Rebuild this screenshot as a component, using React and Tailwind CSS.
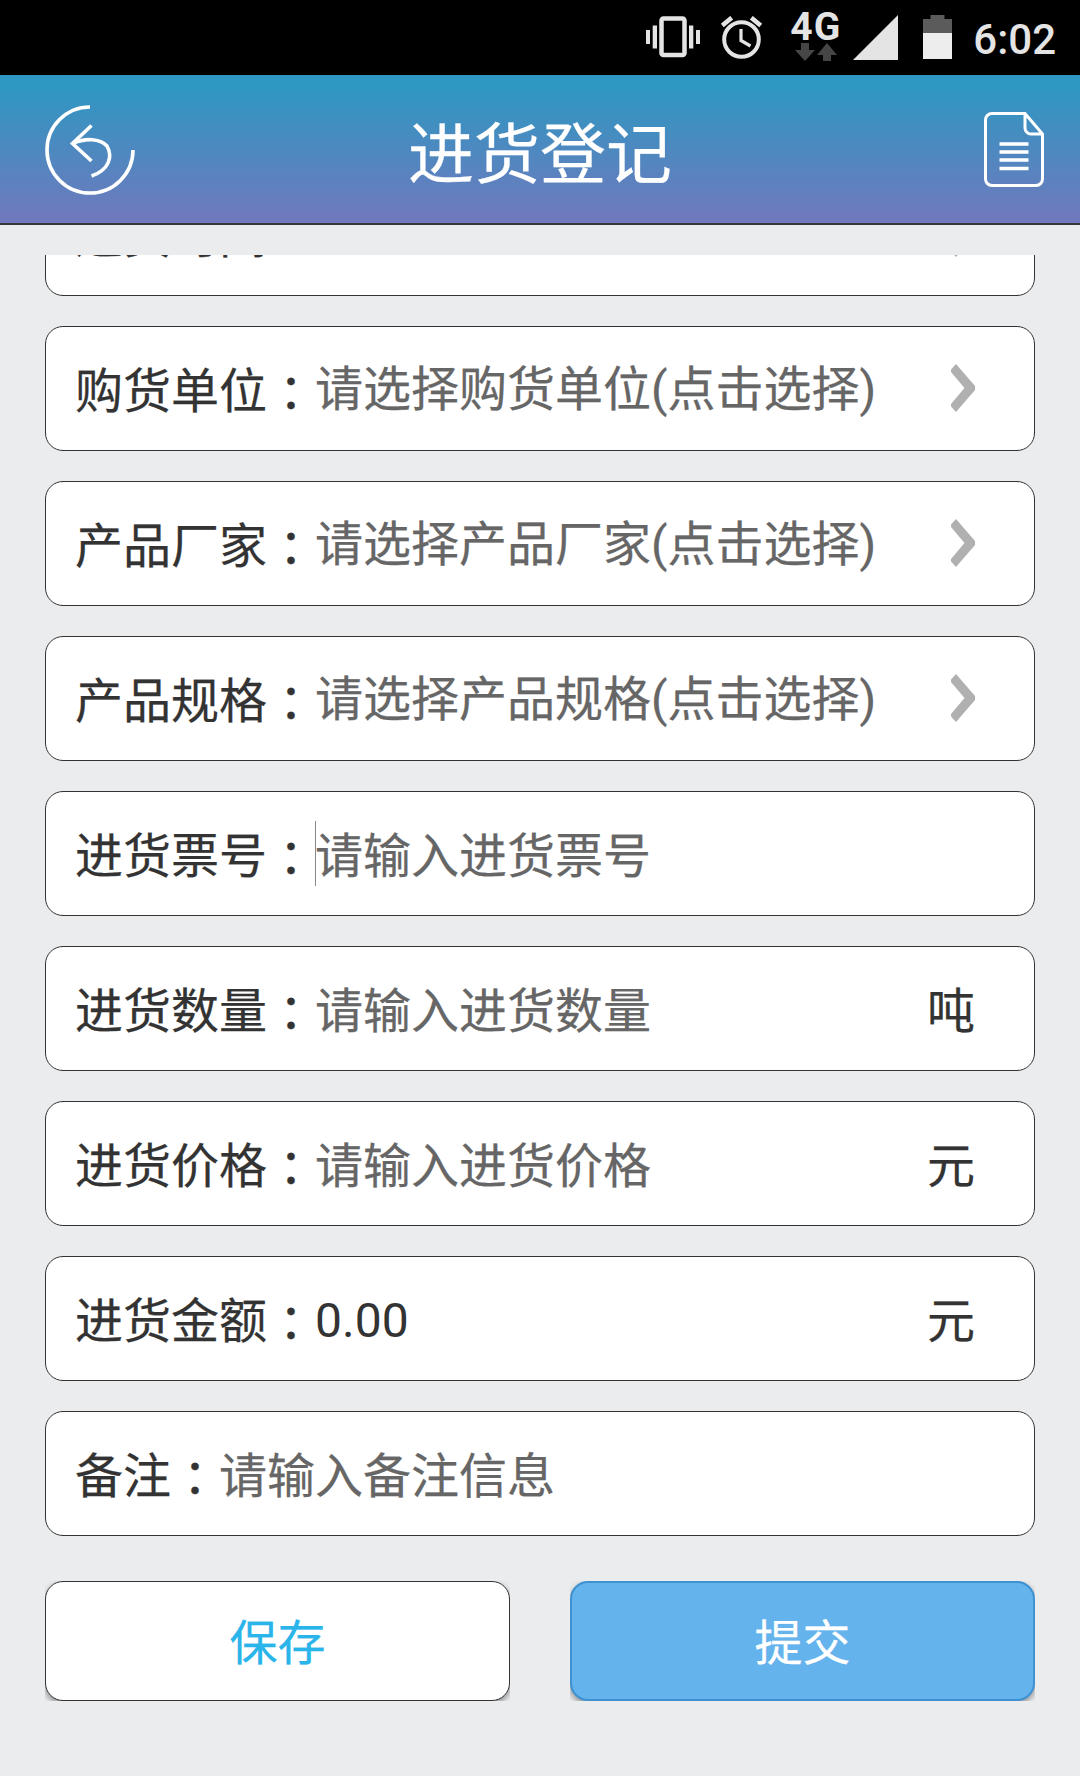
import clsx from "clsx";

const fields = [
  { label: "进货时间", type: "select", text: "" },
  { label: "购货单位", type: "select", text: "请选择购货单位(点击选择)" },
  { label: "产品厂家", type: "select", text: "请选择产品厂家(点击选择)" },
  { label: "产品规格", type: "select", text: "请选择产品规格(点击选择)" },
  { label: "进货票号", type: "input", text: "请输入进货票号", focused: true },
  { label: "进货数量", type: "input", text: "请输入进货数量", unit: "吨" },
  { label: "进货价格", type: "input", text: "请输入进货价格", unit: "元" },
  { label: "进货金额", type: "value", text: "0.00", unit: "元" },
  { label: "备注", type: "input", text: "请输入备注信息" },
];

const StatusBar = () => (
  <div className="h-[75px] shrink-0 bg-black pr-[24px] flex items-start justify-end text-[#e4e4e4]">
    {/* Vibrate */}
    <svg className="mt-4 mr-5" width="54" height="42" viewBox="0 0 54 42" fill="currentColor">
      <rect x="0" y="14" width="4" height="14" />
      <rect x="6.7" y="9.5" width="4.3" height="23" />
      <rect x="15.5" y="2.5" width="23" height="36.5" rx="2" fill="none" stroke="currentColor" strokeWidth="4.5" />
      <rect x="43" y="9.5" width="4.3" height="23" />
      <rect x="50" y="14" width="4" height="14" />
    </svg>

    {/* Alarm */}
    <svg className="mt-4 mr-[27px]" width="43" height="44" viewBox="0 0 43 44" fill="none" stroke="currentColor" strokeWidth="4">
      <circle cx="21.5" cy="23.5" r="17.3" />
      <path d="M2.3 9.5L11.7 1.7M40.7 9.5L31.3 1.7" strokeWidth="4.6" />
      <path d="M21 13V24.5L30.5 30" strokeWidth="3.2" />
    </svg>

    {/* Network */}
    <div className="w-[51px] mr-3 pt-[14px] flex flex-col items-center">
      <span className="h-[27px] leading-[27px] text-[39px] font-bold tracking-[1px] whitespace-nowrap">4G</span>
      <svg className="mt-[2px]" width="42" height="18" viewBox="0 0 42 18" fill="#464646">
        <path d="M6 0H14V7H20L10 18L0 7H6Z" />
        <path d="M28 18H36V12H42L32 0L22 12H28Z" />
      </svg>
    </div>

    {/* Signal */}
    <svg className="mt-[15px] mr-[25px]" width="45" height="45" viewBox="0 0 45 45" fill="currentColor">
      <path d="M45 0V45H0Z" />
    </svg>

    {/* Battery */}
    <svg className="mt-[15px] mr-[21px]" width="29" height="44" viewBox="0 0 29 44">
      <path d="M7.5 0H21.5V4H29V18H0V4H7.5Z" fill="#5b5b5b" />
      <rect y="18" width="29" height="26" fill="#ededed" />
    </svg>

    <span className="mt-[15px] text-[42px] leading-[50px] font-medium">6:02</span>
  </div>
);

const Header = () => (
  <header className="h-[150px] shrink-0 pl-[45px] pr-[36px] flex items-start justify-between text-white bg-linear-to-b/srgb from-[#2e97c2] from-8% to-[#7278bd] border-b-2 border-[#37363b]">
    <button className="w-[90px] mt-[30px]">
      <svg width="90" height="90" viewBox="0 0 90 90" fill="none" stroke="currentColor" strokeWidth="3.6">
        <path d="M45 2A43 43 0 1 0 88 45" />
        <path d="M46.5 20.5L27.5 38.5L46.5 56" />
        <path d="M27.5 38.5C40 33 55 33 62 41C68 52 64 65 46.5 71" />
      </svg>
    </button>
    <h1 className="pt-[33px] text-[66px] leading-[96px] [-webkit-text-stroke:0.25px]">进货登记</h1>
    <button className="w-[99px] mt-[37px] flex justify-end">
      <svg width="60" height="75" viewBox="0 0 60 75" fill="none" stroke="currentColor" strokeWidth="3">
        <path d="M41 1.5H8A6.5 6.5 0 0 0 1.5 8V67A6.5 6.5 0 0 0 8 73.5H52A6.5 6.5 0 0 0 58.5 67V22L41 1.5V16A6 6 0 0 0 47 22H58.5" />
        <path d="M15.5 32H44.5M15.5 40H44.5M15.5 48H44.5M15.5 56.5H44.5" strokeWidth="3.6" />
      </svg>
    </button>
  </header>
);

const Chevron = () => (
  <svg className="-mt-px" width="24" height="48" viewBox="0 0 24 48" fill="#b0b0b0">
    <path d="M0 5.5L5 0L24 22V26L5 48L0 42.5V40L13.5 24L0 8Z" />
  </svg>
);

const Field = ({ label, type, text, unit, focused }) => (
  <div className="h-[125px] shrink-0 pl-[29px] pr-[59px] flex items-center bg-white border border-[#333] rounded-[18px] text-[48px] leading-[64px] text-[#333] whitespace-nowrap">
    <span className="pt-[2px] [-webkit-text-stroke:0.25px]">
      {label}
      <span className="relative top-[3px] font-['Noto_Sans_CJK_TC',sans-serif]">：</span>
    </span>
    <div className="relative flex-1">
      {focused && <span className="absolute left-0 top-[2px] w-px h-[65px] bg-[#888]" />}
      <span
        className={clsx(
          "block",
          type === "value" && "pt-1",
          type === "input" && "pt-[6px] -mb-px text-[#666] [-webkit-text-stroke:0.25px]",
          type === "select" && "pt-[2px] text-[#666] [-webkit-text-stroke:0.25px]"
        )}
      >
        {text}
      </span>
    </div>
    {type === "select" && <Chevron />}
    {unit && <span className="pt-[6px] [-webkit-text-stroke:0.25px]">{unit}</span>}
  </div>
);

export default function App() {
  return (
    <div className="w-[1080px] h-[1776px] flex flex-col overflow-hidden bg-[#ebecee] font-['Roboto','Noto_Sans_CJK_SC',sans-serif]">
      <StatusBar />
      <Header />

      {/* Form, scrolled to the end */}
      <main className="mt-[30px] flex-1 px-[45px] flex flex-col justify-end overflow-hidden pb-[75px]">
        <div className="flex flex-col gap-[30px]">
          {fields.map((field) => (
            <Field key={field.label} {...field} />
          ))}
        </div>

        <div className="mt-[45px] flex gap-[60px] text-[48px] leading-[64px] [-webkit-text-stroke:0.25px]">
          <div className="flex-1 overflow-hidden">
            <button className="w-full h-[120px] pt-[5px] block rounded-[18px] border border-[#333] bg-white text-[#29b4ea] shadow-[0_3px_6px_rgba(0,0,0,0.4)]">
              保存
            </button>
          </div>
          <div className="flex-1 overflow-hidden">
            <button className="w-full h-[120px] pt-[5px] block rounded-[18px] border-2 border-[#3f92d2] bg-[#64b3ec] text-white shadow-[0_3px_6px_rgba(0,0,0,0.4)]">
              提交
            </button>
          </div>
        </div>
      </main>
    </div>
  );
}
